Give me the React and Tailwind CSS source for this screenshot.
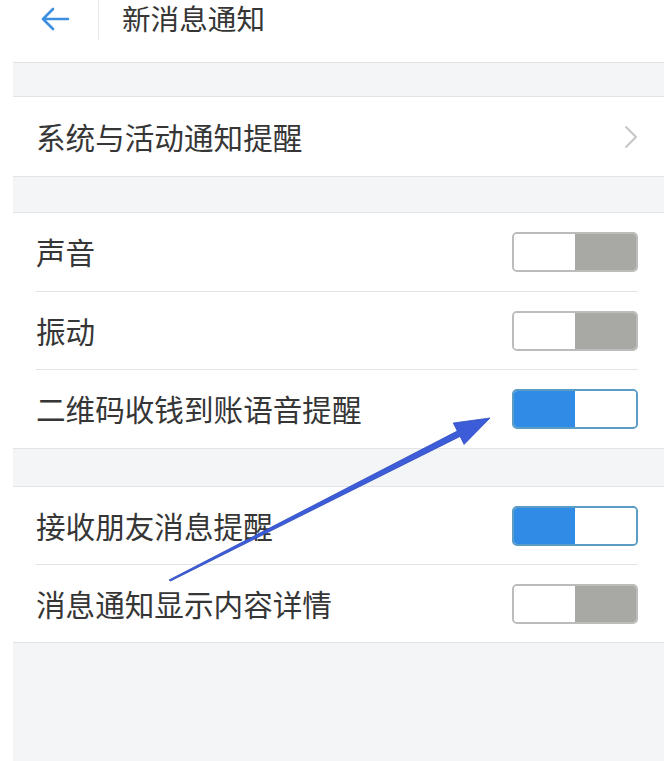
import React from "react";

const font = { fontFamily: '"Noto Sans CJK SC", "Noto Sans", sans-serif' };

function Toggle({ on }) {
  if (on) {
    return (
      <div className="flex h-[40px] w-[126px] overflow-hidden rounded-[5px] border-2 border-[#5b9cc4]">
        <div className="w-1/2 bg-[#2f8be6]" />
        <div className="w-1/2 bg-white" />
      </div>
    );
  }
  return (
    <div className="flex h-[40px] w-[126px] overflow-hidden rounded-[5px] border-2 border-[#bcbdba]">
      <div className="w-1/2 bg-white" />
      <div className="w-1/2 bg-[#a8a9a5]" />
    </div>
  );
}

function Row({ label, children, h, divider }) {
  return (
    <div className={`flex items-center pl-[23px] pr-[26px] ${h} bg-white`}>
      <div className={`flex h-full flex-1 items-center ${divider ? "border-b border-[#e4e4e4]" : ""}`}>
        <span className="flex-1 text-[29.6px] leading-none text-[#363636]">{label}</span>
        {children}
      </div>
    </div>
  );
}

function Gap({ h }) {
  return <div className={`${h} border-y border-[#e2e3e5] bg-[#f4f5f7]`} />;
}

export default function App() {
  return (
    <div className="relative h-[761px] w-[664px] overflow-hidden bg-white" style={font}>
      <header className="flex h-[62px] items-start bg-white">
        <div className="flex h-[38px] w-[98px] items-center pl-[40px]">
          <svg width="30" height="24" viewBox="0 0 30 24" fill="none">
            <path d="M28 12H3M13 2L3 12l10 10" stroke="#3d8fe0" strokeWidth="2.6" strokeLinecap="round" strokeLinejoin="round" />
          </svg>
        </div>
        <div className="h-[40px] w-px bg-[#e8e8e8]" />
        <h1 className="ml-[23px] mt-[4px] text-[28.6px] font-normal leading-none text-[#363636]">新消息通知</h1>
      </header>

      <div className="ml-[13px] flex flex-col">
        <Gap h="h-[35px]" />
        <Row label="系统与活动通知提醒" h="h-[79px]">
          <svg width="14" height="24" viewBox="0 0 14 24" fill="none" className="mr-[0px]">
            <path d="M2 2l10 10L2 22" stroke="#c6c6c6" strokeWidth="2" strokeLinecap="round" strokeLinejoin="round" />
          </svg>
        </Row>
        <Gap h="h-[37px]" />
        <Row label="声音" h="h-[79px]" divider>
          <Toggle on={false} />
        </Row>
        <Row label="振动" h="h-[78px]" divider>
          <Toggle on={false} />
        </Row>
        <Row label="二维码收钱到账语音提醒" h="h-[78px]">
          <Toggle on />
        </Row>
        <Gap h="h-[39px]" />
        <Row label="接收朋友消息提醒" h="h-[78px]" divider>
          <Toggle on />
        </Row>
        <Row label="消息通知显示内容详情" h="h-[77px]">
          <Toggle on={false} />
        </Row>
        <div className="h-[130px] border-t border-[#e2e3e5] bg-[#f4f5f7]" />
      </div>

      <svg className="pointer-events-none absolute left-0 top-0" width="664" height="761" viewBox="0 0 664 761">
        <polygon
          points="169,580 457.3,431 453.3,423 490,418 464.1,444.4 460.1,436.4 170.5,581"
          fill="#3c5cd8"
          stroke="#2f4cc0"
          strokeWidth="0.8"
          strokeLinejoin="round"
        />
      </svg>
    </div>
  );
}
